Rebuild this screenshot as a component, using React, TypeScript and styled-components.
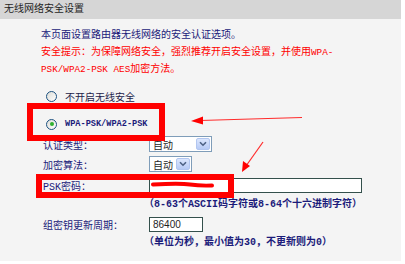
import styled, { createGlobalStyle } from "styled-components";

// ------------------------------------- ESTILOS -------------------------------------

const GlobalStyle = createGlobalStyle`
  body {
    margin: 0;
    background: #fff;
  }
`;

const CJK = `"Liberation Mono", "Noto Sans CJK SC", monospace`;

const Panel = styled.div`
  position: relative;
  width: 401px;
  height: 261px;
  background: #f4f4f4;
  font-family: ${CJK};
  font-size: 10px;
`;

const Header = styled.div`
  height: 19px;
  line-height: 19px;
  padding-left: 4px;
  background: #d6d6d6;
  color: #1f1f1f;
`;

const Intro = styled.div`
  padding: 8px 0 0 41px;
  line-height: 17px;
  color: #1b1b7a;
`;

const Warning = styled.span`
  color: #ff0000;
`;

// latin text in the original is narrower than the CJK glyphs
const Latin = styled.span<{ $size: number; $bold?: boolean }>`
  font-size: ${(p) => p.$size}px;
  font-weight: ${(p) => (p.$bold ? 600 : 400)};
`;

const RadioGroup = styled.div`
  margin-top: 4px;
  padding-left: 46px;
`;

const RadioRow = styled.label<{ $h: number; $shift?: number }>`
  display: flex;
  align-items: center;
  gap: 8px;
  height: ${(p) => p.$h}px;
  padding-top: ${(p) => p.$shift ?? 0}px;
  box-sizing: border-box;
  color: ${(p) => (p.$shift ? "#1b1b7a" : "#22224a")};
`;

const RadioCircle = styled.span<{ $checked?: boolean }>`
  position: relative;
  width: 11px;
  height: 11px;
  border-radius: 50%;
  border: 1px solid #1d5281;
  background: linear-gradient(135deg, #dcdcd6, #ffffff);
  box-sizing: border-box;

  &::after {
    content: "";
    display: ${(p) => (p.$checked ? "block" : "none")};
    position: absolute;
    left: 2.5px;
    top: 2.5px;
    width: 4px;
    height: 4px;
    border-radius: 50%;
    background: #2fb02f;
  }
`;

const Form = styled.div`
  padding-left: 43px;
`;

const FieldRow = styled.div<{ $h: number }>`
  display: flex;
  align-items: center;
  height: ${(p) => p.$h}px;
  color: #1b1b7a;
`;

const Label = styled.span`
  width: 106px;
  flex: none;
`;

const Hint = styled.div<{ $h: number }>`
  height: ${(p) => p.$h}px;
  line-height: ${(p) => p.$h}px;
  padding-left: 101px;
  color: #1b1b7a;
  font-weight: 600;
`;

const SelectBox = styled.div<{ $w: number }>`
  display: flex;
  align-items: center;
  justify-content: space-between;
  width: ${(p) => p.$w}px;
  height: 16px;
  padding: 0 1px 0 3px;
  border: 1px solid #7f9db9;
  background: #fff;
  box-sizing: border-box;
  color: #1f1f1f;
`;

const DropButton = styled.span`
  display: flex;
  align-items: center;
  justify-content: center;
  width: 14px;
  height: 12px;
  border-radius: 2px;
  background: linear-gradient(#dbe6fd, #b7cbf6);
  border: 1px solid #b2c6f0;
  box-sizing: border-box;
`;

const TextInput = styled.div<{ $w: number }>`
  position: relative;
  width: ${(p) => p.$w}px;
  height: 15px;
  line-height: 13px;
  padding-left: 3px;
  border: 1px solid #34504c;
  background: #fff;
  box-sizing: border-box;
  color: #1f1f1f;
  font-family: "Liberation Sans", sans-serif;
`;

const Scribble = styled.svg`
  position: absolute;
  left: 0;
  top: 0;
`;

const MarkBox = styled.div<{ $x: number; $y: number; $w: number; $h: number }>`
  position: absolute;
  left: ${(p) => p.$x}px;
  top: ${(p) => p.$y}px;
  width: ${(p) => p.$w}px;
  height: ${(p) => p.$h}px;
  border: 6px solid #ff0000;
  box-sizing: border-box;
`;

const Arrows = styled.svg`
  position: absolute;
  left: 0;
  top: 0;
  pointer-events: none;
`;

// ------------------------------------- COMPONENTE -------------------------------------

const Chevron = () => (
  <svg width="8" height="6" viewBox="0 0 8 6">
    <path d="M1 1.2 L4 4.2 L7 1.2" fill="none" stroke="#4d6185" strokeWidth="1.6" />
  </svg>
);

const Select = ({ width }: { width: number }) => (
  <SelectBox $w={width}>
    <span>自动</span>
    <DropButton>
      <Chevron />
    </DropButton>
  </SelectBox>
);

const App = () => {
  return (
    <>
      <GlobalStyle />
      <Panel>
        <Header>无线网络安全设置</Header>

        <Intro>
          本页面设置路由器无线网络的安全认证选项。
          <br />
          <Warning>
            安全提示：为保障网络安全，强烈推荐开启安全设置，并使用
            <Latin $size={9.3}>WPA-</Latin>
            <br />
            <Latin $size={9.3}>PSK/WPA2-PSK AES</Latin>加密方法。
          </Warning>
        </Intro>

        <RadioGroup>
          <RadioRow $h={28}>
            <RadioCircle />
            不开启无线安全
          </RadioRow>
          <RadioRow $h={24} $shift={4}>
            <RadioCircle $checked />
            <Latin $size={8.6} $bold>
              WPA-PSK/WPA2-PSK
            </Latin>
          </RadioRow>
        </RadioGroup>

        <Form>
          <FieldRow $h={20}>
            <Label>认证类型：</Label>
            <Select width={63} />
          </FieldRow>
          <FieldRow $h={20}>
            <Label>加密算法：</Label>
            <Select width={43} />
          </FieldRow>
          <FieldRow $h={22}>
            <Label>PSK密码：</Label>
            <TextInput $w={213}>
              <Scribble width="213" height="15">
                <path
                  d="M3 5.5 Q30 4 40 5.5 T62 6.5"
                  fill="none"
                  stroke="#ff0000"
                  strokeWidth="4"
                  strokeLinecap="round"
                />
              </Scribble>
            </TextInput>
          </FieldRow>
          <Hint $h={18}>（8-63个ASCII码字符或8-64个十六进制字符）</Hint>
          <FieldRow $h={20}>
            <Label>组密钥更新周期：</Label>
            <TextInput $w={54}>86400</TextInput>
          </FieldRow>
          <Hint $h={18}>（单位为秒，最小值为30，不更新则为0）</Hint>
        </Form>

        <MarkBox $x={27} $y={103} $w={138} $h={38} />
        <MarkBox $x={36} $y={174} $w={198} $h={24} />

        <Arrows width="405" height="264">
          <line x1="302" y1="117.5" x2="200" y2="120.5" stroke="#ff2a2a" strokeWidth="1.2" />
          <polygon points="191,121 203,116.5 203,124.5" fill="#ff0000" />
          <line x1="263" y1="142" x2="246" y2="166" stroke="#ff2a2a" strokeWidth="1.2" />
          <polygon points="242,172 243,161 250,166" fill="#ff0000" />
        </Arrows>
      </Panel>
    </>
  );
};

export default App;
